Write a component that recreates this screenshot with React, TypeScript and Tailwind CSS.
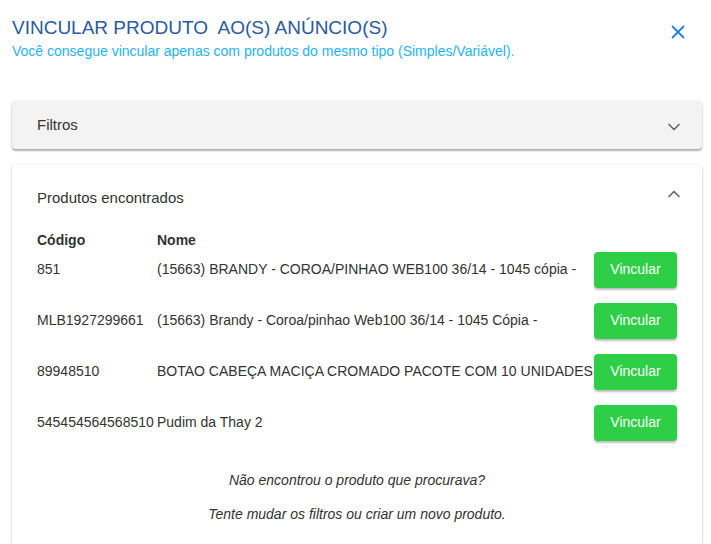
import { X, ChevronDown, ChevronUp } from "lucide-react";

const produtos = [
  { codigo: "851", nome: "(15663) BRANDY - COROA/PINHAO WEB100 36/14 - 1045 cópia -" },
  { codigo: "MLB1927299661", nome: "(15663) Brandy - Coroa/pinhao Web100 36/14 - 1045 Cópia -" },
  { codigo: "89948510", nome: "BOTAO CABEÇA MACIÇA CROMADO PACOTE COM 10 UNIDADES" },
  { codigo: "545454564568510", nome: "Pudim da Thay 2" },
];

export default function App() {
  return (
    <div className="w-[711px] h-[544px] overflow-hidden bg-white font-['Liberation_Sans',Arial,sans-serif] text-[#333]">
      {/* cabeçalho */}
      <div className="flex items-start justify-between pl-3 pr-[22px] pt-[16px]">
        <div>
          <h1 className="text-[19px] leading-[24px] text-[#2a5a9e] whitespace-pre">VINCULAR PRODUTO  AO(S) ANÚNCIO(S)</h1>
          <p className="text-[14px] leading-[18px] mt-[2px] text-[#1fb3f5]">
            Você consegue vincular apenas com produtos do mesmo tipo (Simples/Variável).
          </p>
        </div>
        <button className="mt-[5px] text-[#1e80f0]">
          <X size={22} strokeWidth={2} />
        </button>
      </div>

      <div className="pl-3 pr-[9px] pt-[41px] flex flex-col gap-4">
        {/* filtros */}
        <div className="h-12 bg-[#f3f3f3] rounded-[4px] shadow-[0_2px_2px_rgba(0,0,0,0.3),0_0_2px_rgba(0,0,0,0.12)] flex items-center justify-between pl-[25px] pr-[18px]">
          <span className="text-[15px]">Filtros</span>
          <ChevronDown size={20} className="text-[#666] mt-[3px]" />
        </div>

        {/* produtos */}
        <div className="bg-white rounded-[4px] shadow-[0_1px_3px_rgba(0,0,0,0.2),0_0_2px_rgba(0,0,0,0.08)] pl-[25px] pr-[25px] pb-6">
          <div className="h-[66px] flex items-center justify-between">
            <span className="text-[15px]">Produtos encontrados</span>
            <ChevronUp size={20} className="text-[#666] -mt-2 mr-[-7px]" />
          </div>

          <div className="grid grid-cols-[120px_1fr_auto] text-[14px] items-center">
            <div className="font-bold leading-4 mt-[1px] -mb-[4px]">Código</div>
            <div className="font-bold leading-4 mt-[1px] -mb-[4px] col-span-2">Nome</div>
            {produtos.map((p) => (
              <div key={p.codigo} className="contents">
                <div className="whitespace-nowrap">{p.codigo}</div>
                <div className="whitespace-nowrap">{p.nome}</div>
                <div className="py-[7.5px] pl-[1px]">
                  <button className="h-9 w-[83px] rounded-[4px] bg-[#2ecf47] text-white text-[14px] shadow-[0_2px_2px_rgba(0,0,0,0.25)]">
                    Vincular
                  </button>
                </div>
              </div>
            ))}
          </div>

          <div className="mt-[24px] flex flex-col items-center gap-[18px] italic text-[14px] leading-4 text-[#333]">
            <p>Não encontrou o produto que procurava?</p>
            <p>Tente mudar os filtros ou criar um novo produto.</p>
          </div>
        </div>
      </div>
    </div>
  );
}
